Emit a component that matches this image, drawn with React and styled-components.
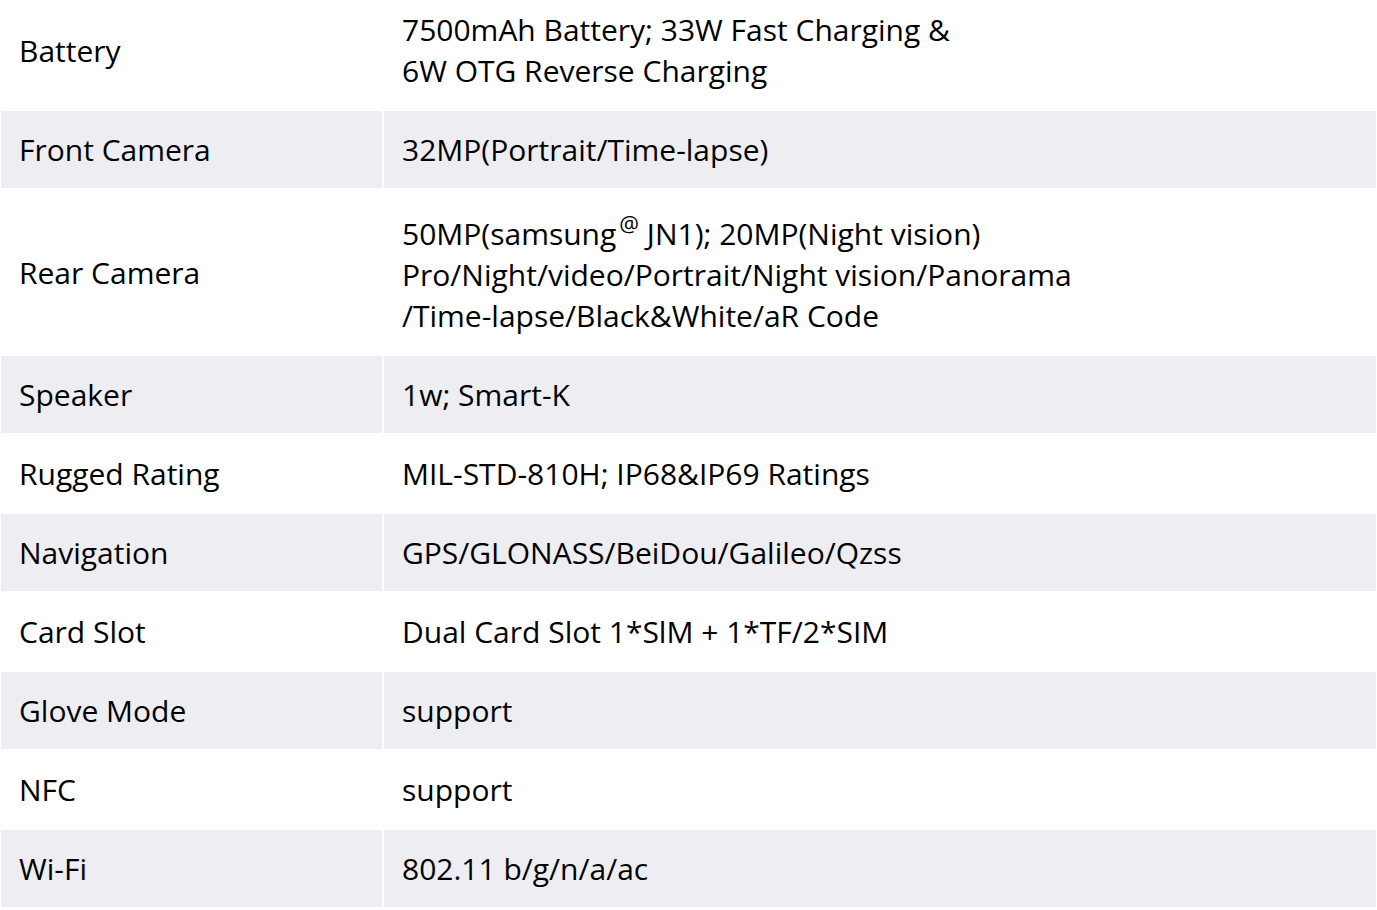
import React from 'react';
import styled, { createGlobalStyle } from 'styled-components';

const GlobalStyle = createGlobalStyle`
  html, body {
    margin: 0;
    padding: 0;
    background: #fff;
    overflow: hidden;
  }
  body {
    font-family: "Open Sans", "Noto Sans", sans-serif;
    color: #000;
  }
`;

const SpecTable = styled.div`
  display: grid;
  grid-template-columns: 383px 1fr;
  width: 1377px;
  margin-top: -10px;
`;

const Cell = styled.div`
  background: ${(p) => (p.shaded ? '#eeeef2' : '#fff')};
  border: 1px solid #fff;
  padding: 18px 0 18px 18px;
  display: flex;
  align-items: center;
  font-size: 30px;
  line-height: 41px;
`;

const Value = styled.div`
  white-space: pre-line;
`;

const Mark = styled.sup`
  margin-left: 3px;
  font-size: 22px;
  line-height: 31px;
  vertical-align: 13px;
`;

const specs = [
  { name: 'Battery', value: '7500mAh Battery; 33W Fast Charging &\n6W OTG Reverse Charging' },
  { name: 'Front Camera', value: '32MP(Portrait/Time-lapse)' },
  {
    name: 'Rear Camera',
    value: (
      <>
        50MP(samsung<Mark>@</Mark> JN1); 20MP(Night vision)
        {'\n'}Pro/Night/video/Portrait/Night vision/Panorama
        {'\n'}/Time-lapse/Black&amp;White/aR Code
      </>
    ),
  },
  { name: 'Speaker', value: '1w; Smart-K' },
  { name: 'Rugged Rating', value: 'MIL-STD-810H; IP68&IP69 Ratings' },
  { name: 'Navigation', value: 'GPS/GLONASS/BeiDou/Galileo/Qzss' },
  { name: 'Card Slot', value: 'Dual Card Slot 1*SlM + 1*TF/2*SIM' },
  { name: 'Glove Mode', value: 'support' },
  { name: 'NFC', value: 'support' },
  { name: 'Wi-Fi', value: '802.11 b/g/n/a/ac' },
];

export default function App() {
  return (
    <>
      <GlobalStyle />
      <SpecTable>
        {specs.map((s, i) => (
          <React.Fragment key={s.name}>
            <Cell shaded={i % 2 === 1}>{s.name}</Cell>
            <Cell shaded={i % 2 === 1}>
              <Value>{s.value}</Value>
            </Cell>
          </React.Fragment>
        ))}
      </SpecTable>
    </>
  );
}
